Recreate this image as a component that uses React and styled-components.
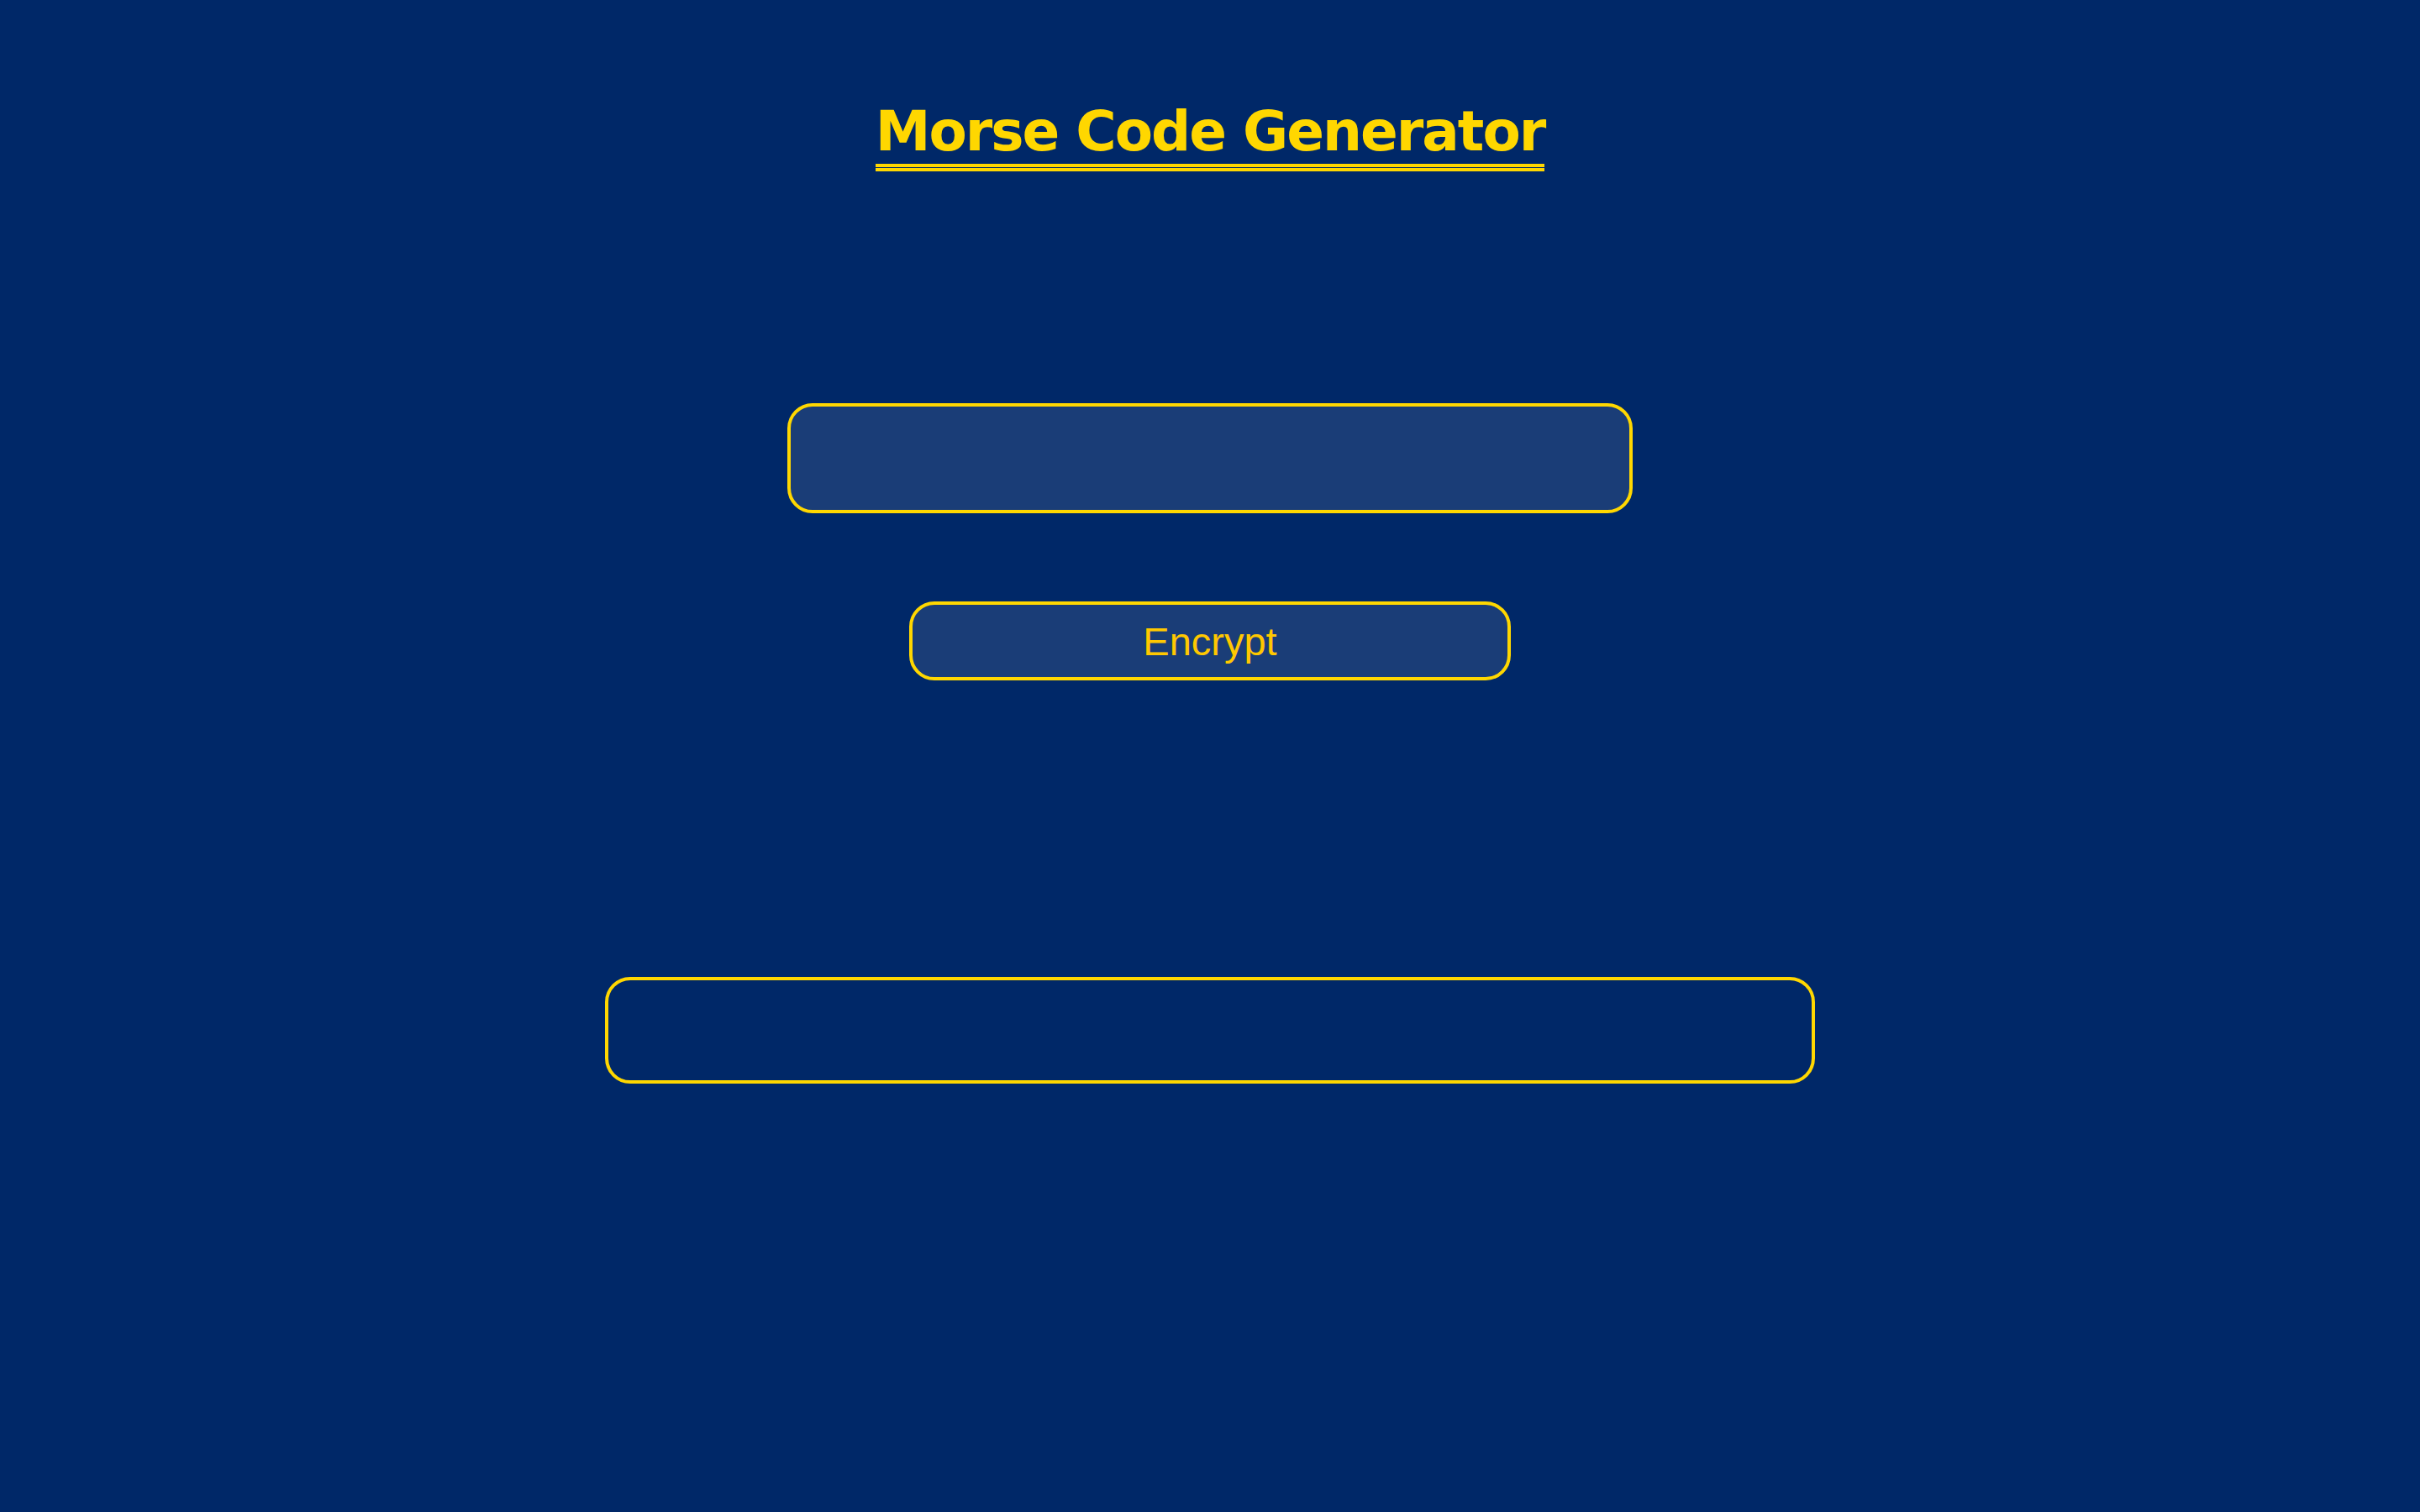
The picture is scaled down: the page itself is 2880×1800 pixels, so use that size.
import styled, { createGlobalStyle } from "styled-components";

const GlobalStyle = createGlobalStyle`
  html,
  body {
    margin: 0;
    padding: 0;
    background-color: #002868;
  }
  * {
    box-sizing: border-box;
  }
`;

const Page = styled.main`
  min-height: 100vh;
  display: flex;
  flex-direction: column;
  align-items: center;
  background-color: #002868;
`;

const TitleBlock = styled.header`
  display: inline-flex;
  flex-direction: column;
  padding-top: 118px;
`;

const Title = styled.h1`
  margin: 0;
  font-family: "DejaVu Sans", Verdana, sans-serif;
  font-weight: 700;
  font-size: 66px;
  line-height: 77px;
  letter-spacing: -2px;
  color: #ffd700;
  white-space: nowrap;
`;

const DoubleRule = styled.div`
  height: 9px;
  border-top: 4px solid #ffd700;
  border-bottom: 4px solid #ffd700;
`;

const Field = styled.input`
  margin-top: 276px;
  width: 1006px;
  height: 131px;
  padding: 0 32px;
  border: 4px solid #ffd700;
  border-radius: 30px;
  background-color: rgba(255, 255, 255, 0.1);
  color: #ffd700;
  font-family: "Liberation Sans", Arial, sans-serif;
  font-size: 40px;
  outline: none;
`;

const EncryptButton = styled.button`
  margin-top: 105px;
  width: 716px;
  height: 94px;
  display: flex;
  align-items: center;
  justify-content: center;
  border: 4px solid #ffd700;
  border-radius: 30px;
  background-color: rgba(255, 255, 255, 0.1);
  color: #ffc800;
  font-family: "Liberation Sans", Arial, sans-serif;
  font-size: 47px;
  cursor: pointer;
`;

const Output = styled.div`
  margin-top: 353px;
  width: 1440px;
  height: 127px;
  border: 4px solid #ffd700;
  border-radius: 30px;
  color: #ffd700;
  font-family: "Liberation Mono", monospace;
  font-size: 40px;
`;

function App() {
  return (
    <>
      <GlobalStyle />
      <Page>
        <TitleBlock>
          <Title>Morse Code Generator</Title>
          <DoubleRule />
        </TitleBlock>
        <Field type="text" />
        <EncryptButton>Encrypt</EncryptButton>
        <Output />
      </Page>
    </>
  );
}

export default App;
